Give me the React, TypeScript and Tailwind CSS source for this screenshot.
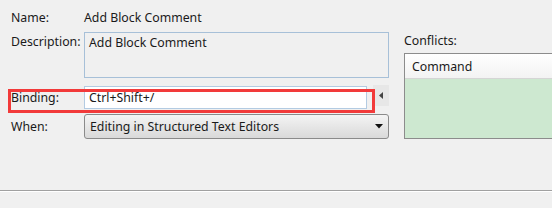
import React from 'react';

const App: React.FC = () => {
  return (
    <div
      className="relative w-[552px] h-[208px] overflow-hidden bg-[#f0f0f0] text-[12.3px] leading-[16px] text-[#1a1a1a]"
      style={{ fontFamily: '"Noto Sans", "Liberation Sans", sans-serif' }}
    >
      <div className="flex h-[190px]">
        {/* left: key binding fields */}
        <div className="flex flex-col pl-[11px] w-[389px]">
          <div className="flex pt-[10px]">
            <span className="w-[73px]">Name:</span>
            <span>Add Block Comment</span>
          </div>

          <div className="flex mt-[6px]">
            <span className="w-[73px] pt-[2px]">Description:</span>
            <div className="w-[305px] h-[46px] bg-[#f0f0f0] border border-[#a7c0d8] pl-[4px] pt-[2px]">
              Add Block Comment
            </div>
          </div>

          <div className="flex items-start mt-[8px]">
            <span className="w-[73px] pt-[4px]">Binding:</span>
            <div className="w-[283px] h-[23px] bg-white border border-[#b3cbe2] pl-[4px] flex items-center">
              Ctrl+Shift+/
            </div>
            <div className="ml-[6px] w-[16px] h-[21px] -mt-[1px] bg-[#e7e7e7] flex items-center justify-center">
              <svg width="5" height="7" viewBox="0 0 5 7">
                <path d="M4 0 L0 3.5 L4 7 Z" fill="#444" />
              </svg>
            </div>
          </div>

          <div className="flex items-center mt-[5px]">
            <span className="w-[73px]">When:</span>
            <div className="w-[305px] h-[25px] rounded-[3px] border border-[#8a8a8a] bg-gradient-to-b from-[#f4f4f4] to-[#d9d9d9] pl-[5px] pr-[5px] flex items-center justify-between">
              <span>Editing in Structured Text Editors</span>
              <svg width="8" height="5" viewBox="0 0 8 5">
                <path d="M0 0 H8 L4 4.5 Z" fill="#111" />
              </svg>
            </div>
          </div>
        </div>

        {/* right: conflicts table */}
        <div className="flex flex-col ml-[15px] flex-1 pt-[33px]">
          <span>Conflicts:</span>
          <div className="mt-[4px] w-[200px] h-[86px] border border-[#8c8c8c] bg-[#cde8d0] flex flex-col">
            <div className="h-[25px] bg-gradient-to-b from-white to-[#f3f3f3] border-b border-[#d5d5d5] pl-[7px] pt-[5px]">
              Command
            </div>
          </div>
        </div>
      </div>

      <div className="border-t border-[#a0a0a0]" />
      <div className="border-t border-white" />

      {/* red annotation around the binding row */}
      <div className="absolute left-[8px] top-[89px] w-[367px] h-[24px] border-[3px] border-[#f23a3a] pointer-events-none" />
    </div>
  );
};

export default App;
